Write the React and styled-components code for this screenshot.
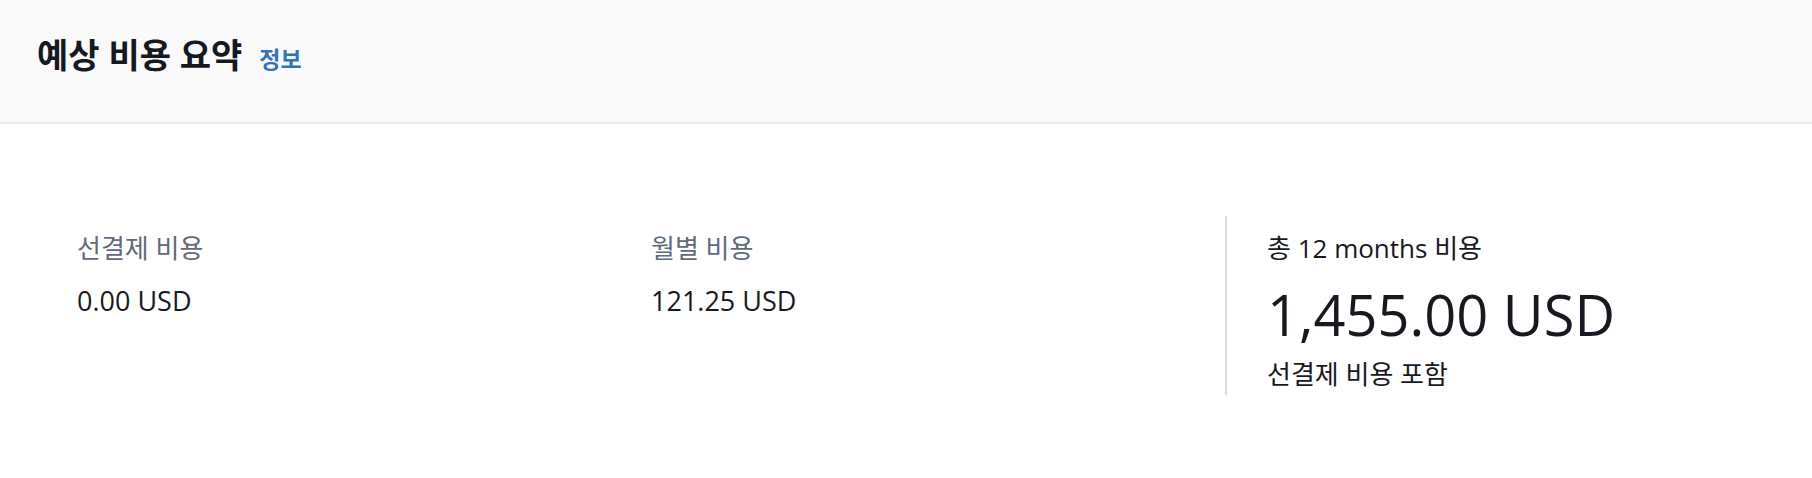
import styled, { createGlobalStyle } from 'styled-components';

const GlobalStyle = createGlobalStyle`
  html, body {
    margin: 0;
    padding: 0;
    background: #ffffff;
  }
  body {
    font-family: 'Open Sans', 'Noto Sans CJK KR', sans-serif;
    color: #16191f;
  }
`;

const Container = styled.section`
  width: 100%;
  min-height: 478px;
  background: #ffffff;
`;

const Header = styled.header`
  display: flex;
  align-items: baseline;
  gap: 17px;
  height: 124px;
  box-sizing: border-box;
  padding: 32px 37px 0;
  background: #fafafa;
  border-bottom: 2px solid #e9e9e9;
`;

const Title = styled.h2`
  margin: 0;
  font-size: 34px;
  line-height: 46px;
  font-weight: 700;
  color: #16191f;
`;

const InfoLink = styled.a`
  font-size: 23px;
  font-weight: 700;
  color: #2f72bd;
  text-decoration: none;
  cursor: pointer;
`;

const Body = styled.div`
  display: grid;
  grid-template-columns: 574px 574px 1fr;
  padding: 92px 37px 0 77px;
`;

const Column = styled.div`
  display: flex;
  flex-direction: column;
  padding: 14px 0 3px ${(p) => (p.$divided ? '40px' : '0')};
  border-left: ${(p) => (p.$divided ? '2px solid #d5dbdb' : 'none')};
`;

const Label = styled.div`
  font-size: 26px;
  line-height: 36px;
  color: ${(p) => (p.$strong ? '#16191f' : '#5f6b7a')};
`;

const Value = styled.div`
  margin-top: 17px;
  font-size: 27px;
  line-height: 36px;
  color: #16191f;
`;

const BigValue = styled.div`
  margin-top: 15px;
  font-size: 56px;
  line-height: 67px;
  color: #16191f;
`;

const SubLabel = styled.div`
  margin-top: 8px;
  font-size: 26px;
  line-height: 36px;
  color: #16191f;
`;

export default function App() {
  return (
    <>
      <GlobalStyle />
      <Container>
        <Header>
          <Title>예상 비용 요약</Title>
          <InfoLink>정보</InfoLink>
        </Header>
        <Body>
          <Column>
            <Label>선결제 비용</Label>
            <Value>0.00 USD</Value>
          </Column>
          <Column>
            <Label>월별 비용</Label>
            <Value>121.25 USD</Value>
          </Column>
          <Column $divided>
            <Label $strong>총 12 months 비용</Label>
            <BigValue>1,455.00 USD</BigValue>
            <SubLabel>선결제 비용 포함</SubLabel>
          </Column>
        </Body>
      </Container>
    </>
  );
}
